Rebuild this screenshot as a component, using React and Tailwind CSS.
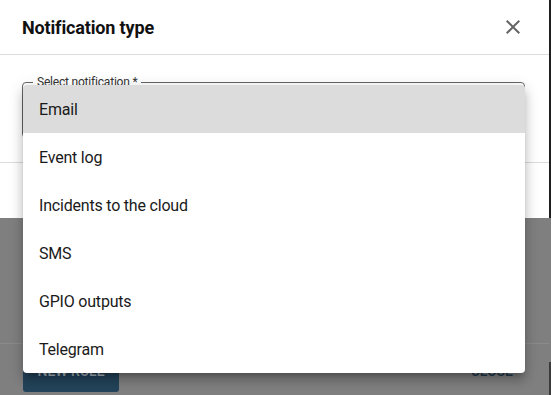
import React from 'react';

const options = ['Email', 'Event log', 'Incidents to the cloud', 'SMS', 'GPIO outputs', 'Telegram'];

// Close icon (material "close" glyph)
const CloseIcon = () => (
  <svg width="24" height="24" viewBox="0 0 24 24" fill="#666">
    <path d="M19 6.41 17.59 5 12 10.59 6.41 5 5 6.41 10.59 12 5 17.59 6.41 19 12 13.41 17.59 19 19 17.59 13.41 12z" />
  </svg>
);

const App = () => {
  return (
    <div className="relative flex w-[551px] h-[395px] overflow-hidden bg-[#7f7f7f] text-[#1a1a1a] font-['Roboto',sans-serif]">
      <div className="flex flex-col w-[549px]">
        {/* Notification type dialog */}
        <div className="bg-white h-[218px] flex flex-col">
          <div className="h-[55px] border-b border-[#dcdcdc] flex items-center justify-between pl-[22px] pr-[24px]">
            <span className="text-[18px] font-bold tracking-[-0.15px] text-[#111]">Notification type</span>
            <CloseIcon />
          </div>
          <div className="h-[108px] border-b border-[#dcdcdc] px-[22px] pt-[27px]">
            <div className="relative h-[56px] w-[503px] rounded border border-[#666]">
              <span className="absolute -top-[9px] left-[10px] bg-white px-[4px] text-[12px] leading-[16px] tracking-[-0.2px] text-[#333]">
                Select notification *
              </span>
            </div>
          </div>
          <div className="flex-1" />
        </div>

        {/* Dimmed parent dialog behind */}
        <div className="flex-1 flex flex-col">
          <div className="h-[125px]" />
          <div className="flex-1 border-t border-[#8b8b8b] flex items-center justify-between pl-[23px] pr-[36px] pt-[4px]">
            <div className="w-[96px] h-[40px] rounded-[3px] bg-[#23445a] flex items-center justify-center text-[14px] font-medium text-[#a9b4bc]">
              NEW RULE
            </div>
            <span className="text-[14px] font-medium text-[#1f3a4d]">CLOSE</span>
          </div>
        </div>
      </div>

      {/* scrollbar strip */}
      <div className="flex flex-col w-[2px]">
        <div className="h-[218px] bg-[#1f1f1f]" />
        <div className="h-[144px] bg-[#7f7f7f]" />
        <div className="flex-1 bg-[#3a3a3a]" />
      </div>

      {/* Open select menu */}
      <ul className="absolute left-[23px] top-[85px] w-[502px] bg-white rounded-[4px] overflow-hidden shadow-[0px_5px_5px_-3px_rgba(0,0,0,0.2),0px_8px_10px_1px_rgba(0,0,0,0.14),0px_3px_14px_2px_rgba(0,0,0,0.12)]">
        {options.map((opt, i) => (
          <li
            key={opt}
            className={`h-[48px] flex items-center pl-[16px] pt-[2px] text-[16px] tracking-[-0.2px] ${i === 0 ? 'bg-[#dcdcdc]' : ''}`}
          >
            {opt}
          </li>
        ))}
      </ul>
    </div>
  );
};

export default App;
